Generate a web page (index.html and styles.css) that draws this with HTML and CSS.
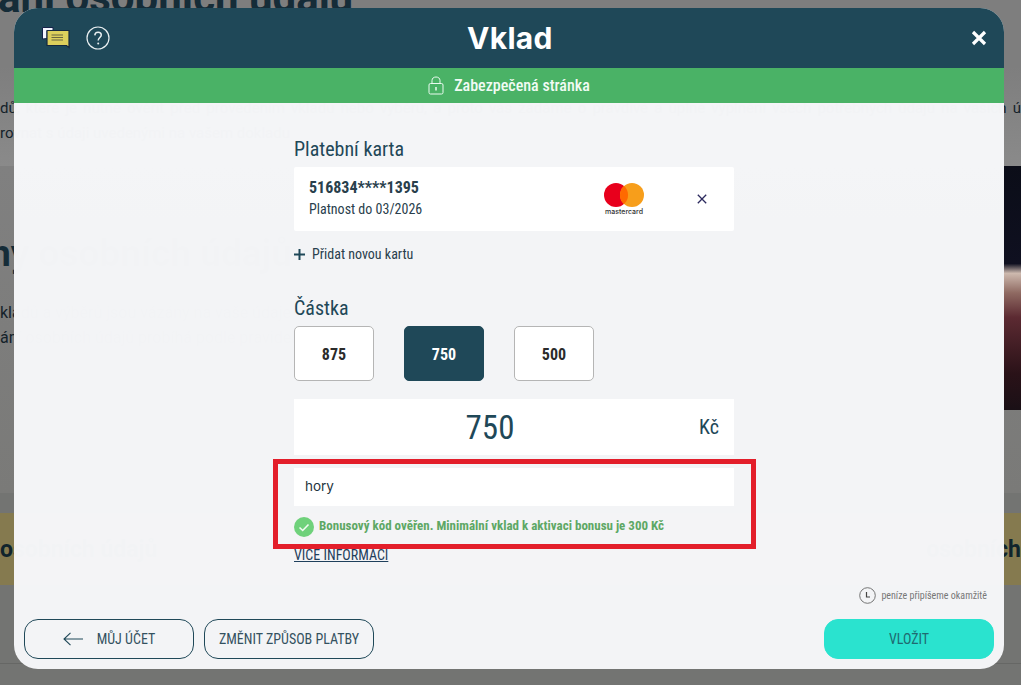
FILE: index.html
```html
<!doctype html>
<html lang="cs">
    <head>
        <meta charset="utf-8">
        <title>Vklad</title>
        <link rel="stylesheet" href="styles.css">
    </head>
    <body>
        <div class="page">
            <section class="page_top">
                <h1 class="page_title">ani osobních údajů</h1>
                <p class="page_text wide">dů, které je nutné ověřit před provedením vkladu nebo výběru, a proto vás žádáme o pravdivé a úplné vyplnění všech potřebných údajů na vašich ú</p>
                <p class="page_text">rovnat s údaji uvedenými na vašem dokladu</p>
            </section>
            <section class="page_hero">
                <div class="hero_copy">
                    <h2 class="hero_title">ny osobních údajů</h2>
                    <p class="page_text">kladů a výběrů jsou vázány na vaše údaje</p>
                    <p class="page_text">ání osobních údajů probíhá podle pravidel</p>
                </div>
                <div class="hero_image"></div>
            </section>
            <section class="page_band">
                <span class="band_text">osobních údajů</span>
                <span class="band_text">osobních</span>
            </section>
            <div class="page_rule"></div>
        </div>

        <div class="modal">
            <header class="modal_head">
                <div class="head_icons">
                    <svg class="icon_chat" width="28" height="22" viewBox="0 0 28 22">
                        <path d="M0.500 0.500H11V4H5V11.500L0.500 12Z" fill="#f4f6ff" stroke="#16234a" stroke-width="1"/>
                        <path d="M5 3.500H27V20.500L24.500 18.500H5Z" fill="#ddcf5c" stroke="#16283f" stroke-width="1.200"/>
                        <path d="M9.500 8H21M9.500 10.500H21M9.500 13H21" stroke="#6b6640" stroke-width="1.200"/>
                    </svg>
                    <svg class="icon_help" width="24" height="24" viewBox="0 0 24 24">
                        <circle cx="12" cy="12" r="11" fill="none" stroke="#e8eef0" stroke-width="1.200"/>
                        <path d="M8.800 9.400C8.900 7.400 10.200 6.300 12.100 6.300C14 6.300 15.300 7.500 15.300 9.100C15.300 11.400 12.200 11.700 12.200 14.500" fill="none" stroke="#e8eef0" stroke-width="1.500"/>
                        <circle cx="12.200" cy="17.400" r="1" fill="#e8eef0"/>
                    </svg>
                </div>
                <div class="modal_title">Vklad</div>
                <svg class="icon_close" width="16" height="16" viewBox="0 0 16 16">
                    <path d="M2 2L14 14M14 2L2 14" stroke="#ffffff" stroke-width="3.200"/>
                </svg>
            </header>
            <div class="secure_bar">
                <svg width="16" height="19" viewBox="0 0 16 19">
                    <rect x="1" y="7.500" width="14" height="10.500" rx="1.500" fill="none" stroke="#eafaf0" stroke-width="1"/>
                    <path d="M4 7.500V4.500C4 2.300 5.700 1 8 1C10.300 1 12 2.300 12 4.500V7.500" fill="none" stroke="#eafaf0" stroke-width="1"/>
                    <path d="M8 11V14.500" stroke="#eafaf0" stroke-width="1.500"/>
                </svg>
                <span class="condensed secure_text">Zabezpečená stránka</span>
            </div>
            <div class="modal_body">
                <div class="deposit_column">
                    <h3 class="section_label"><span class="condensed">Platební karta</span></h3>
                    <div class="saved_card">
                        <div class="card_info">
                            <div class="card_number">516834****1395</div>
                            <div class="card_valid">Platnost do 03/2026</div>
                        </div>
                        <div class="card_logo">
                            <svg width="40" height="24" viewBox="0 0 40 24">
                                <circle cx="12" cy="12" r="12" fill="#e8001c"/>
                                <circle cx="28" cy="12" r="12" fill="#f79e1b"/>
                                <path d="M20 3A12 12 0 0 1 20 21A12 12 0 0 1 20 3Z" fill="#ff6a00"/>
                            </svg>
                            <span class="card_brand">mastercard</span>
                        </div>
                        <svg class="card_remove" width="10" height="10" viewBox="0 0 10 10">
                            <path d="M0.800 0.800L9.200 9.200M9.200 0.800L0.800 9.200" stroke="#2c2a5e" stroke-width="1.300"/>
                        </svg>
                    </div>
                    <div class="add_card">
                        <svg width="11" height="11" viewBox="0 0 11 11">
                            <path d="M5.500 0V11M0 5.500H11" stroke="#1f4858" stroke-width="2"/>
                        </svg>
                        <span class="condensed add_text">Přidat novou kartu</span>
                    </div>
                    <h3 class="section_label amount_label"><span class="condensed">Částka</span></h3>
                    <div class="amount_options">
                        <div class="amount_option"><span class="condensed">875</span></div>
                        <div class="amount_option selected"><span class="condensed">750</span></div>
                        <div class="amount_option"><span class="condensed">500</span></div>
                    </div>
                    <div class="amount_box">
                        <span class="condensed amount_value">750</span>
                        <span class="condensed amount_currency">Kč</span>
                    </div>
                    <div class="bonus_input">hory</div>
                    <div class="bonus_note">
                        <svg width="20" height="20" viewBox="0 0 20 20">
                            <circle cx="10" cy="10" r="10" fill="#6fd17b"/>
                            <path d="M5.500 10.500L8.700 13.500L14.500 7.500" fill="none" stroke="#f2fbf3" stroke-width="1.600"/>
                        </svg>
                        <span class="condensed bonus_text">Bonusový kód ověřen. Minimální vklad k aktivaci bonusu je 300 Kč</span>
                    </div>
                    <a class="condensed more_link">VICE INFORMACI</a>
                </div>
                <div class="time_note">
                    <svg width="17" height="17" viewBox="0 0 17 17">
                        <circle cx="8.500" cy="8.500" r="7.800" fill="none" stroke="#666666" stroke-width="0.900"/>
                        <path d="M7.500 5V10H11" fill="none" stroke="#444444" stroke-width="1.200"/>
                    </svg>
                    <span class="condensed time_text">peníze připíšeme okamžitě</span>
                </div>
            </div>
            <footer class="modal_foot">
                <a class="foot_button">
                    <svg width="20" height="14" viewBox="0 0 20 14">
                        <path d="M20 7H1M7.500 0.800L1 7L7.500 13.200" fill="none" stroke="#1f4858" stroke-width="1.100"/>
                    </svg>
                    <span class="condensed foot_text">MŮJ ÚČET</span>
                </a>
                <a class="foot_button"><span class="condensed foot_text">ZMĚNIT ZPŮSOB PLATBY</span></a>
                <a class="foot_button submit"><span class="condensed foot_text">VLOŽIT</span></a>
            </footer>
        </div>
        <div class="highlight_box"></div>
    </body>
</html>
```

FILE: styles.css
```css
html, body {
    margin:0;
    height:100%;
    overflow:hidden;
}

body {
    font-family:"Roboto Condensed", Roboto, sans-serif;
    background-color:#737472;
    color:#1f4858;
}

.condensed {
    display:inline-block;
    white-space:nowrap;
}

.page {
    display:flex;
    flex-direction:column;
    height:100%;
    font-family:Roboto, sans-serif;
    color:#14222a;
}

.page_top {
    height:166px;
    background:linear-gradient(#7e7e7e 40%, #8a8a8a 100%);
    overflow:hidden;
}

.page_title {
    margin:-30px 0 0 -2px;
    font-size:42px;
    line-height:56px;
    white-space:nowrap;
    color:#152c38;
}

.page_text {
    margin:0;
    font-size:15px;
    line-height:25px;
    white-space:nowrap;
}

.page_title + .page_text {
    margin-top:70px;
}

.page_text.wide {
    white-space:normal;
    text-align-last:justify;
}

.page_hero {
    display:flex;
    height:327px;
    background:linear-gradient(#808080, #7a7a78);
}

.hero_copy {
    flex:1;
    padding-top:67px;
    overflow:hidden;
}

.hero_title {
    margin:0 0 25px -10px;
    font-size:37px;
    line-height:42px;
    white-space:nowrap;
    color:#152c38;
}

.hero_copy .page_text {
    font-size:16px;
}

.hero_image {
    width:17px;
    height:244px;
    background:linear-gradient(#0b0d18 0%, #0f1020 40%, #cdb9ae 44%, #8f6a62 52%, #5c2a32 62%, #2a1218 85%, #1a1016 100%);
}

.page_band {
    display:flex;
    justify-content:space-between;
    align-items:center;
    height:72px;
    margin-top:20px;
    background-color:#857a4f;
    overflow:hidden;
}

.band_text {
    font-size:23px;
    font-weight:700;
    white-space:nowrap;
    color:#10242c;
}

.page_rule {
    height:78px;
    border-bottom:1px solid #666765;
}

.modal {
    position:absolute;
    left:14px;
    top:8px;
    width:990px;
    height:661px;
    display:flex;
    flex-direction:column;
    border-radius:24px;
    overflow:hidden;
    font-stretch:condensed;
    background-color:rgba(245,246,248,0.99);
}

.modal_head {
    display:flex;
    align-items:center;
    height:60px;
    flex-shrink:0;
    padding:0 17px 0 28px;
    background-color:#1f4858;
}

.head_icons {
    display:flex;
    align-items:center;
    gap:16px;
    width:425px;
}

.modal_title {
    font-family:Inter, sans-serif;
    font-stretch:normal;
    font-size:30px;
    font-weight:700;
    letter-spacing:0.3px;
    color:#ffffff;
}

.icon_close {
    margin-left:auto;
}

.secure_bar {
    display:flex;
    align-items:center;
    justify-content:center;
    gap:10px;
    height:35px;
    flex-shrink:0;
    background-color:#4ab266;
}

.secure_text {
    font-size:16px;
    font-weight:500;
    color:#f1fbf4;
}

.modal_body {
    flex:1;
    display:flex;
    flex-direction:column;
    padding-top:35px;
}

.deposit_column {
    display:flex;
    flex-direction:column;
    width:440px;
    margin-left:280px;
}

.section_label {
    margin:0;
    height:29px;
    font-size:20px;
    line-height:23px;
    font-weight:400;
}

.saved_card {
    display:flex;
    align-items:center;
    height:64px;
    border-radius:2px;
    background-color:#ffffff;
}

.card_info {
    flex:1;
    padding-left:15px;
}

.card_number {
    font-size:16px;
    line-height:20px;
    font-weight:700;
    color:#29404c;
}

.card_valid {
    font-size:14px;
    line-height:22px;
    color:#29404c;
}

.card_logo {
    display:flex;
    flex-direction:column;
    align-items:center;
    width:40px;
}

.card_brand {
    font-family:Inter, sans-serif;
    font-stretch:normal;
    font-size:7px;
    line-height:9px;
    font-weight:500;
    color:#333333;
}

.card_remove {
    margin:0 27px 0 53px;
}

.add_card {
    display:flex;
    align-items:center;
    gap:7px;
    margin-top:14px;
    height:18px;
}

.add_text {
    font-size:14px;
    color:#29404c;
}

.amount_label {
    margin-top:34px;
}

.amount_options {
    display:flex;
    gap:30px;
}

.amount_option {
    display:flex;
    align-items:center;
    justify-content:center;
    width:78px;
    height:52px;
    padding-top:1px;
    border:1px solid #b5b5b5;
    border-radius:5px;
    background-color:#ffffff;
    font-size:16px;
    font-weight:700;
    color:#2b2b2b;
}

.amount_option.selected {
    border-color:#1f4858;
    background-color:#1f4858;
    color:#ffffff;
}

.amount_box {
    display:flex;
    align-items:center;
    justify-content:center;
    position:relative;
    height:56px;
    margin-top:18px;
    padding-right:48px;
    background-color:#ffffff;
}

.amount_value {
    font-size:33px;
    color:#1f4858;
}

.amount_currency {
    position:absolute;
    right:15px;
    font-size:20px;
}

.bonus_input {
    height:38px;
    margin-top:13px;
    padding-left:11px;
    font-family:Inter, sans-serif;
    font-stretch:normal;
    font-size:13.500px;
    line-height:37px;
    color:#1f3540;
    background-color:#ffffff;
}

.bonus_note {
    display:flex;
    align-items:center;
    gap:5px;
    margin-top:11px;
}

.bonus_text {
    margin-bottom:3px;
    font-size:13px;
    font-weight:700;
    color:#5ea865;
}

.more_link {
    align-self:flex-start;
    margin-top:10px;
    font-size:14px;
    line-height:17px;
    text-decoration:underline;
    color:#1f3f5c;
}

.time_note {
    display:flex;
    align-items:center;
    justify-content:flex-end;
    gap:5px;
    margin-top:auto;
    padding:0 17px 15px 0;
}

.time_text {
    font-size:10px;
    color:#777777;
}

.modal_foot {
    display:flex;
    gap:10px;
    flex-shrink:0;
    padding:0 10px 10px 10px;
}

.foot_button {
    display:flex;
    align-items:center;
    justify-content:center;
    gap:14px;
    box-sizing:border-box;
    width:170px;
    height:40px;
    border:1px solid #1f4858;
    border-radius:14px;
}

.foot_text {
    font-size:14px;
    color:#34515f;
}

.foot_button.submit {
    margin-left:auto;
    border-color:#2ae3cf;
    background-color:#2ae3cf;
}

.foot_button.submit .foot_text {
    color:#1f6a70;
}

.highlight_box {
    position:absolute;
    left:273px;
    top:459px;
    width:473px;
    height:80px;
    border:5px solid #e31e2a;
}
```
